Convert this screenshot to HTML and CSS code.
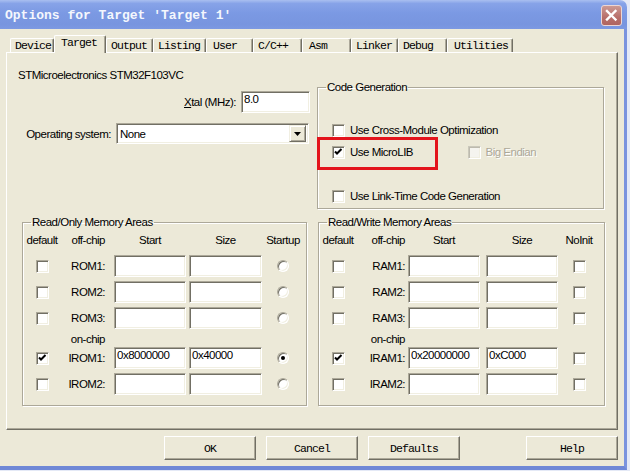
FILE: index.html
```html
<!DOCTYPE html>
<html>
<head>
<meta charset="utf-8">
<title>Options for Target</title>
<link rel="stylesheet" href="styles.css">
</head>
<body>
<div class="window">
  <div class="titlebar">
    <span class="title">Options for Target 'Target 1'</span>
    <span class="close"><svg width="19" height="19" viewBox="0 0 19 19"><path d="M5 5 L13.5 13.5 M13.5 5 L5 13.5" stroke="#fff" stroke-width="2.4" stroke-linecap="square" fill="none"/></svg></span>
  </div>
  <div class="client">
    <div class="tabs">
      <span class="tab t-device">Device</span>
      <span class="tab t-target active">Target</span>
      <span class="tab t-output">Output</span>
      <span class="tab t-listing">Listing</span>
      <span class="tab t-user">User</span>
      <span class="tab t-cc">C/C++</span>
      <span class="tab t-asm">Asm</span>
      <span class="tab t-linker">Linker</span>
      <span class="tab t-debug">Debug</span>
      <span class="tab t-util">Utilities</span>
    </div>
    <div class="panel">
      <div class="top">
        <div class="left-col">
          <div class="device">STMicroelectronics STM32F103VC</div>
          <div class="xtal-row">
            <span class="lbl"><u>X</u>tal (MHz):</span>
            <span class="edit xtal">8.0</span>
          </div>
          <div class="os-row">
            <span class="lbl">Operating system:</span>
            <span class="combo"><span class="combo-text">None</span><span class="combo-btn"><svg width="7" height="4" viewBox="0 0 7 4"><path d="M0 0 H7 L3.5 4 Z" fill="#000"/></svg></span></span>
          </div>
        </div>
        <fieldset class="group codegen">
          <legend>Code Generation</legend>
          <div class="gbody">
            <div class="chk-row"><span class="check"></span><span class="clabel">Use Cross-Module Optimization</span></div>
            <div class="chk-row">
              <span class="item"><span class="check"><svg width="11" height="11" viewBox="0 0 11 11"><path d="M2 4.5 L4 6.5 L8.5 2" stroke="#000" stroke-width="2" fill="none"/></svg></span><span class="clabel">Use MicroLIB</span></span>
              <span class="item"><span class="check disabled"></span><span class="clabel dis">Bi<u>g</u> Endian</span></span>
            </div>
            <div class="chk-row last"><span class="check"></span><span class="clabel">Use Link-Time Code Generation</span></div>
          </div>
        </fieldset>
      </div>
      <div class="bottom">
        <fieldset class="group mem ro">
          <legend>Read/Only Memory Areas</legend>
          <div class="gbody">
            <div class="mrow mhead"><span class="c-def">default</span><span class="c-lbl">off-chip</span><span class="c-start">Start</span><span class="c-size">Size</span><span class="c-last">Startup</span></div>
            <div class="mrow"><span class="c-def"><span class="check"></span></span><span class="c-lbl">ROM1:</span><span class="c-start edit"></span><span class="c-size edit"></span><span class="c-last"><span class="radio"></span></span></div>
            <div class="mrow"><span class="c-def"><span class="check"></span></span><span class="c-lbl">ROM2:</span><span class="c-start edit"></span><span class="c-size edit"></span><span class="c-last"><span class="radio"></span></span></div>
            <div class="mrow"><span class="c-def"><span class="check"></span></span><span class="c-lbl">ROM3:</span><span class="c-start edit"></span><span class="c-size edit"></span><span class="c-last"><span class="radio"></span></span></div>
            <div class="mrow onchip"><span class="c-def"></span><span class="c-lbl">on-chip</span></div>
            <div class="mrow after-onchip"><span class="c-def"><span class="check"><svg width="11" height="11" viewBox="0 0 11 11"><path d="M2 4.5 L4 6.5 L8.5 2" stroke="#000" stroke-width="2" fill="none"/></svg></span></span><span class="c-lbl">IROM1:</span><span class="c-start edit">0x8000000</span><span class="c-size edit">0x40000</span><span class="c-last"><span class="radio on"></span></span></div>
            <div class="mrow"><span class="c-def"><span class="check"></span></span><span class="c-lbl">IROM2:</span><span class="c-start edit"></span><span class="c-size edit"></span><span class="c-last"><span class="radio"></span></span></div>
          </div>
        </fieldset>
        <fieldset class="group mem rw">
          <legend>Read/Write Memory Areas</legend>
          <div class="gbody">
            <div class="mrow mhead"><span class="c-def">default</span><span class="c-lbl">off-chip</span><span class="c-start">Start</span><span class="c-size">Size</span><span class="c-last">NoInit</span></div>
            <div class="mrow"><span class="c-def"><span class="check"></span></span><span class="c-lbl">RAM1:</span><span class="c-start edit"></span><span class="c-size edit"></span><span class="c-last"><span class="check"></span></span></div>
            <div class="mrow"><span class="c-def"><span class="check"></span></span><span class="c-lbl">RAM2:</span><span class="c-start edit"></span><span class="c-size edit"></span><span class="c-last"><span class="check"></span></span></div>
            <div class="mrow"><span class="c-def"><span class="check"></span></span><span class="c-lbl">RAM3:</span><span class="c-start edit"></span><span class="c-size edit"></span><span class="c-last"><span class="check"></span></span></div>
            <div class="mrow onchip"><span class="c-def"></span><span class="c-lbl">on-chip</span></div>
            <div class="mrow after-onchip"><span class="c-def"><span class="check"><svg width="11" height="11" viewBox="0 0 11 11"><path d="M2 4.5 L4 6.5 L8.5 2" stroke="#000" stroke-width="2" fill="none"/></svg></span></span><span class="c-lbl">IRAM1:</span><span class="c-start edit">0x20000000</span><span class="c-size edit">0xC000</span><span class="c-last"><span class="check"></span></span></div>
            <div class="mrow"><span class="c-def"><span class="check"></span></span><span class="c-lbl">IRAM2:</span><span class="c-start edit"></span><span class="c-size edit"></span><span class="c-last"><span class="check"></span></span></div>
          </div>
        </fieldset>
      </div>
      <div class="highlight"></div>
    </div>
    <div class="buttons">
      <span class="btn">OK</span>
      <span class="btn">Cancel</span>
      <span class="btn">Defaults</span>
      <span class="btn help">Help</span>
    </div>
  </div>
</div>
</body>
</html>
```
FILE: styles.css
```css
* { box-sizing: border-box; }
html, body { margin: 0; padding: 0; }
body {
  width: 630px;
  height: 471px;
  overflow: hidden;
  background: #e4e9f6;
  font-family: "Liberation Sans", Arial, sans-serif;
  font-size: 11.5px;
  letter-spacing: -0.5px;
  color: #000;
}
.window { width: 627px; }

/* title bar */
.titlebar {
  height: 29px;
  display: flex;
  align-items: center;
  justify-content: space-between;
  padding: 0 5px 0 5px;
  background: linear-gradient(to bottom, #a9bff0 0%, #87a3e8 12%, #7b99e3 45%, #7895df 85%, #7d99e2 100%);
  border-top-right-radius: 7px;
}
.title {
  font-family: "Liberation Mono", monospace;
  font-weight: bold;
  font-size: 13px;
  letter-spacing: 0;
  color: #f4f7fd;
  margin-top: 1px;
}
.close {
  width: 21px;
  height: 21px;
  margin-top: 1px;
  border: 1px solid #ecd6d4;
  border-radius: 3px;
  background: linear-gradient(to bottom, #cc9a94, #b86f6a 60%, #b06560);
  display: flex;
  align-items: center;
  justify-content: center;
}
.close svg { display: block; }

/* client area */
.client {
  width: 627px;
  height: 441px;
  background: #ece9d8;
  border-right: 3px solid #7a93de;
  border-bottom: 4px solid #6f88d6;
  padding-top: 6px;
}

/* tabs */
.tabs {
  display: flex;
  align-items: flex-end;
  height: 18px;
  margin-left: 10px;
  margin-bottom: -1px;
  position: relative;
  z-index: 1;
}
.tab {
  height: 14px;
  margin-bottom: 1px;
  background: #ece9d8;
  border-top: 1px solid #fff;
  border-left: 1px solid #fff;
  border-right: 1px solid #716f64;
  box-shadow: inset -1px 0 0 #aca899;
  border-radius: 2px 2px 0 0;
  padding-left: 4px;
  font-family: "Liberation Mono", monospace;
  font-size: 11.5px;
  letter-spacing: -0.9px;
  line-height: 13px;
  white-space: nowrap;
}
.tab.active {
  height: 18px;
  margin-bottom: 0;
  padding-left: 6px;
  padding-bottom: 3px;
  line-height: 13px;
}
.t-device { width: 44px; }
.t-target { width: 52px; }
.t-output { width: 47px; }
.t-listing { width: 53px; }
.t-user { width: 47px; padding-left: 6px; }
.t-cc { width: 49px; }
.t-asm { width: 49px; padding-left: 6px; }
.t-linker { width: 47px; }
.t-debug { width: 49px; }
.t-util { width: 66px; padding-left: 6px; }

/* panel */
.panel {
  position: relative;
  margin-left: 6px;
  width: 612px;
  height: 378px;
  border: 1px solid;
  border-color: #fff #716f64 #716f64 #fff;
  box-shadow: inset -1px -1px 0 #aca899;
}
.top { display: flex; }
.left-col { width: 310px; flex: none; }
.device { margin-top: 15px; padding-left: 11px; line-height: 14px; }
.xtal-row {
  margin-top: 9px;
  height: 22px;
  display: flex;
  align-items: center;
  justify-content: flex-end;
  padding-right: 7px;
}
.xtal-row .lbl { margin-right: 5px; }
.xtal { width: 69px; height: 22px; }
.os-row {
  margin-top: 10px;
  height: 21px;
  display: flex;
  align-items: center;
  justify-content: flex-end;
  padding-right: 8px;
}
.os-row .lbl { margin-right: 5px; }

/* sunken controls */
.edit, .combo, .check, .radio {
  background: #fff;
  border: 1px solid;
  border-color: #aca899 #fff #fff #aca899;
  box-shadow: inset 1px 1px 0 #716f64, inset -1px -1px 0 #f1efe2;
}
.edit {
  display: block;
  height: 22px;
  padding: 1px 0 0 2px;
  line-height: 13px;
  white-space: nowrap;
}
.combo {
  width: 193px;
  height: 21px;
  display: flex;
  align-items: center;
  padding: 1px 2px 1px 1px;
}
.combo-text { flex: 1; padding-left: 2px; line-height: 14px; }
.combo-btn {
  width: 17px;
  height: 17px;
  background: #ece9d8;
  border: 1px solid;
  border-color: #f1efe2 #716f64 #716f64 #f1efe2;
  box-shadow: inset 1px 1px 0 #fff, inset -1px -1px 0 #aca899;
  display: flex;
  align-items: center;
  justify-content: center;
}
.combo-btn svg { display: block; }
.check {
  width: 13px;
  height: 13px;
  flex: none;
  display: block;
}
.check svg { display: block; }
.check.disabled {
  background: #f5f4ef;
  border-color: #cac8bb #fff #fff #cac8bb;
  box-shadow: inset 1px 1px 0 #bdbaae, inset -1px -1px 0 #f1efe2;
}
.radio {
  width: 12px;
  height: 12px;
  border-radius: 50%;
  display: flex;
  align-items: center;
  justify-content: center;
}
.radio.on::after {
  content: "";
  width: 4px;
  height: 4px;
  border-radius: 50%;
  background: #000;
}

/* group boxes */
fieldset.group {
  margin: 0;
  padding: 0;
  min-width: 0;
  border: 1px solid #aca899;
  box-shadow: 1px 1px 0 #fff, inset 1px 1px 0 #fff;
}
fieldset.group legend {
  margin-left: 8px;
  padding: 0 1px;
  line-height: 14px;
}
fieldset.codegen { width: 287px; margin-top: 27px; flex: none; }
.codegen .gbody { padding: 28px 0 4px 14px; }
.chk-row { display: flex; align-items: center; height: 16px; }
.chk-row + .chk-row { margin-top: 6px; }
.chk-row.last { margin-top: 28px; }
.clabel { margin-left: 5px; white-space: nowrap; line-height: 14px; }
.item { display: flex; align-items: center; width: 141px; }
.clabel.dis { color: #aca899; text-shadow: 1px 1px 0 #fff; }

/* memory areas */
.bottom {
  display: flex;
  gap: 11px;
  margin-top: 6px;
  padding-left: 15px;
}
fieldset.mem.ro { width: 285px; }
fieldset.mem.rw { width: 287px; }
.mem .gbody { padding: 4px 0 10px 0; }
.mrow { display: flex; align-items: center; height: 22px; margin-top: 4px; }
.mrow.mhead { height: 14px; margin-top: 0; }
.mrow.mhead + .mrow { margin-top: 8px; }
.mrow.onchip { height: 14px; margin-top: 3px; }
.mrow.after-onchip { margin-top: 1px; }
.c-def, .c-last {
  display: flex;
  justify-content: center;
  align-items: center;
  flex: none;
}
.c-def { width: 38px; }
.c-last { width: 42px; }
.c-lbl { flex: none; text-align: right; padding-right: 2px; white-space: nowrap; }
.c-start, .c-size { flex: none; text-align: center; }
.c-start.edit, .c-size.edit { text-align: left; }
.ro .c-lbl { width: 46px; }
.ro .c-start { margin-left: 7px; width: 72px; }
.ro .c-size { margin-left: 3px; width: 73px; }
.rw .c-lbl { width: 50px; }
.rw .c-start { margin-left: 1px; width: 72px; }
.rw .c-size { margin-left: 6px; width: 72px; }

/* red annotation box */
.highlight {
  position: absolute;
  left: 310px;
  top: 84px;
  width: 121px;
  height: 33px;
  border: 3px solid #e3141c;
}

/* buttons */
.buttons {
  display: flex;
  margin-top: 6px;
  padding-left: 164px;
  gap: 10px;
}
.btn {
  width: 92px;
  height: 24px;
  background: #ece9d8;
  border: 1px solid;
  border-color: #fff #716f64 #716f64 #fff;
  box-shadow: inset -1px -1px 0 #aca899;
  display: flex;
  align-items: center;
  justify-content: center;
  font-family: "Liberation Mono", monospace;
  font-size: 11.5px;
  letter-spacing: -0.9px;
}
.btn.help { margin-left: 56px; }
```
